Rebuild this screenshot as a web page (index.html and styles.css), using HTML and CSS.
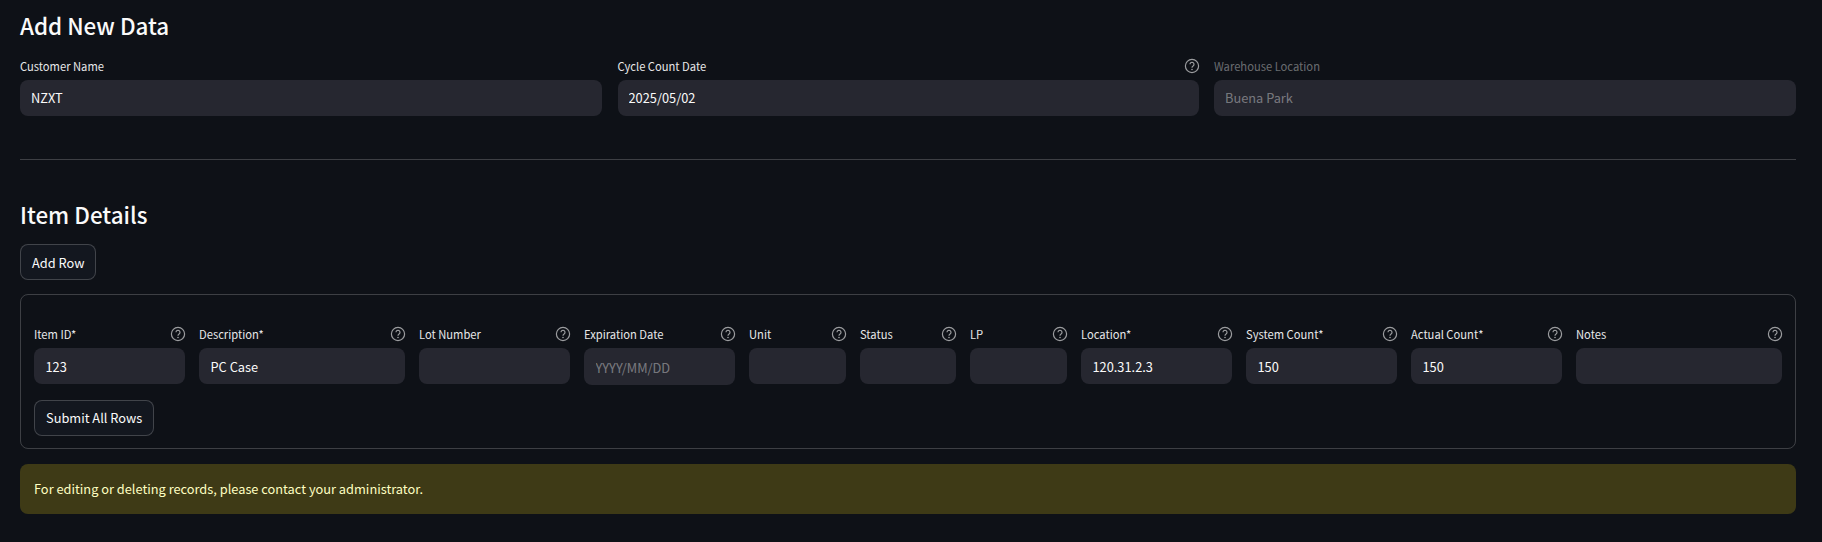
FILE: index.html
```html
<!DOCTYPE html>
<html lang="en">

<head>
    <meta charset="UTF-8">
    <title>Add New Data</title>
    <link rel="stylesheet" href="styles.css">
</head>

<body>
<svg class="sprite" width="0" height="0">
    <symbol id="help" viewBox="0 0 16 16">
        <circle cx="8" cy="8" r="6.6" fill="none" stroke="currentColor" stroke-width="1.2"/>
        <path d="M6 6.3a2 2 0 1 1 3.1 1.7c-.7.45-1.1.85-1.1 1.7" fill="none" stroke="currentColor" stroke-width="1.2"/>
        <circle cx="8" cy="11.5" r=".8" fill="currentColor"/>
    </symbol>
</svg>

<main class="page">
    <h2 class="heading heading-top">Add New Data</h2>

    <div class="top-row">
        <div class="field">
            <div class="field-label"><span>Customer Name</span></div>
            <input class="field-input" type="text" value="NZXT">
        </div>
        <div class="field">
            <div class="field-label">
                <span>Cycle Count Date</span>
                <svg class="help"><use href="#help"/></svg>
            </div>
            <input class="field-input" type="text" value="2025/05/02">
        </div>
        <div class="field field-disabled">
            <div class="field-label"><span>Warehouse Location</span></div>
            <input class="field-input" type="text" value="Buena Park" disabled>
        </div>
    </div>

    <hr class="divider">

    <h2 class="heading">Item Details</h2>
    <button class="btn btn-add" type="button">Add Row</button>

    <form class="card">
        <div class="item-row">
            <div class="field">
                <div class="field-label"><span>Item ID*</span><svg class="help"><use href="#help"/></svg></div>
                <input class="field-input" type="text" value="123">
            </div>
            <div class="field">
                <div class="field-label"><span>Description*</span><svg class="help"><use href="#help"/></svg></div>
                <input class="field-input" type="text" value="PC Case">
            </div>
            <div class="field">
                <div class="field-label"><span>Lot Number</span><svg class="help"><use href="#help"/></svg></div>
                <input class="field-input" type="text">
            </div>
            <div class="field">
                <div class="field-label"><span>Expiration Date</span><svg class="help"><use href="#help"/></svg></div>
                <input class="field-input field-date" type="text" placeholder="YYYY/MM/DD">
            </div>
            <div class="field">
                <div class="field-label"><span>Unit</span><svg class="help"><use href="#help"/></svg></div>
                <input class="field-input" type="text">
            </div>
            <div class="field">
                <div class="field-label"><span>Status</span><svg class="help"><use href="#help"/></svg></div>
                <input class="field-input" type="text">
            </div>
            <div class="field">
                <div class="field-label"><span>LP</span><svg class="help"><use href="#help"/></svg></div>
                <input class="field-input" type="text">
            </div>
            <div class="field">
                <div class="field-label"><span>Location*</span><svg class="help"><use href="#help"/></svg></div>
                <input class="field-input" type="text" value="120.31.2.3">
            </div>
            <div class="field">
                <div class="field-label"><span>System Count*</span><svg class="help"><use href="#help"/></svg></div>
                <input class="field-input" type="text" value="150">
            </div>
            <div class="field">
                <div class="field-label"><span>Actual Count*</span><svg class="help"><use href="#help"/></svg></div>
                <input class="field-input" type="text" value="150">
            </div>
            <div class="field">
                <div class="field-label"><span>Notes</span><svg class="help"><use href="#help"/></svg></div>
                <input class="field-input" type="text">
            </div>
        </div>
        <button class="btn btn-submit" type="button">Submit All Rows</button>
    </form>

    <div class="notice">For editing or deleting records, please contact your administrator.</div>
</main>
</body>

</html>
```

FILE: styles.css
```css
html, body {
    margin: 0;
    height: 100%;
    overflow: hidden;
    background-color: #0e1117;
}

body {
    font-family: "Noto Sans CJK JP", "Noto Sans", sans-serif;
    color: #fafafa;
}

.sprite {
    position: absolute;
}

.page {
    padding: 0 26px 0 20px;
}

.heading {
    margin: 0;
    height: 40px;
    line-height: 40px;
    font-size: 22.4px;
    font-weight: 500;
}

.heading-top {
    margin-top: 5px;
    margin-bottom: 11px;
}

.top-row {
    display: grid;
    grid-template-columns: 582fr 581fr 582fr;
    gap: 15.5px;
}

.field {
    min-width: 0;
}

.field-label {
    display: flex;
    justify-content: space-between;
    align-items: center;
    height: 20px;
    margin-bottom: 4px;
    font-size: 11.2px;
    line-height: 18px;
    color: #e8e8e9;
}

.field-label span {
    margin-bottom: 1px;
}

.field-disabled .field-label {
    color: rgba(250, 250, 250, 0.4);
}

.help {
    flex: none;
    width: 16px;
    height: 16px;
    margin-right: -1px;
    color: rgba(250, 250, 250, 0.6);
}

.field-input {
    display: block;
    box-sizing: border-box;
    width: 100%;
    height: 36px;
    padding: 0 11px 1px;
    border: 0;
    border-radius: 8px;
    outline: 0;
    font-family: inherit;
    font-size: 12.8px;
    color: #fafafa;
    background-color: #262730;
}

.item-row .field-input {
    padding: 1px 11.5px 0;
}

.field-input:disabled {
    color: rgba(250, 250, 250, 0.4);
}

.field-input::placeholder {
    color: rgba(250, 250, 250, 0.4);
}

.item-row .field-date {
    height: 37px;
}

.divider {
    height: 1px;
    margin: 43px 0 0;
    border: 0;
    background-color: rgba(250, 250, 250, 0.2);
}

.divider + .heading {
    margin-top: 34px;
    margin-bottom: 10px;
}

.btn {
    display: block;
    box-sizing: border-box;
    height: 36px;
    padding: 0 11px;
    border: 1px solid rgba(250, 250, 250, 0.2);
    border-radius: 8px;
    font-family: inherit;
    font-size: 12.8px;
    color: #fafafa;
    background-color: #13171f;
}

.btn-submit {
    padding-bottom: 2px;
}

.card {
    box-sizing: border-box;
    height: 155px;
    margin-top: 14px;
    padding: 29px 13px 13px;
    border: 1px solid rgba(250, 250, 250, 0.2);
    border-radius: 8px;
}

.item-row {
    display: grid;
    grid-template-columns: 151fr 206fr 151fr 151fr 97fr 96fr 97fr 151fr 151fr 151fr 206fr;
    gap: 14px;
    margin-bottom: 15px;
}

.notice {
    display: flex;
    align-items: center;
    box-sizing: border-box;
    height: 50px;
    margin-top: 15px;
    padding: 0 14px 2px;
    border-radius: 8px;
    font-size: 12.8px;
    color: #ffffc2;
    background-color: rgba(255, 227, 18, 0.2);
}
```
